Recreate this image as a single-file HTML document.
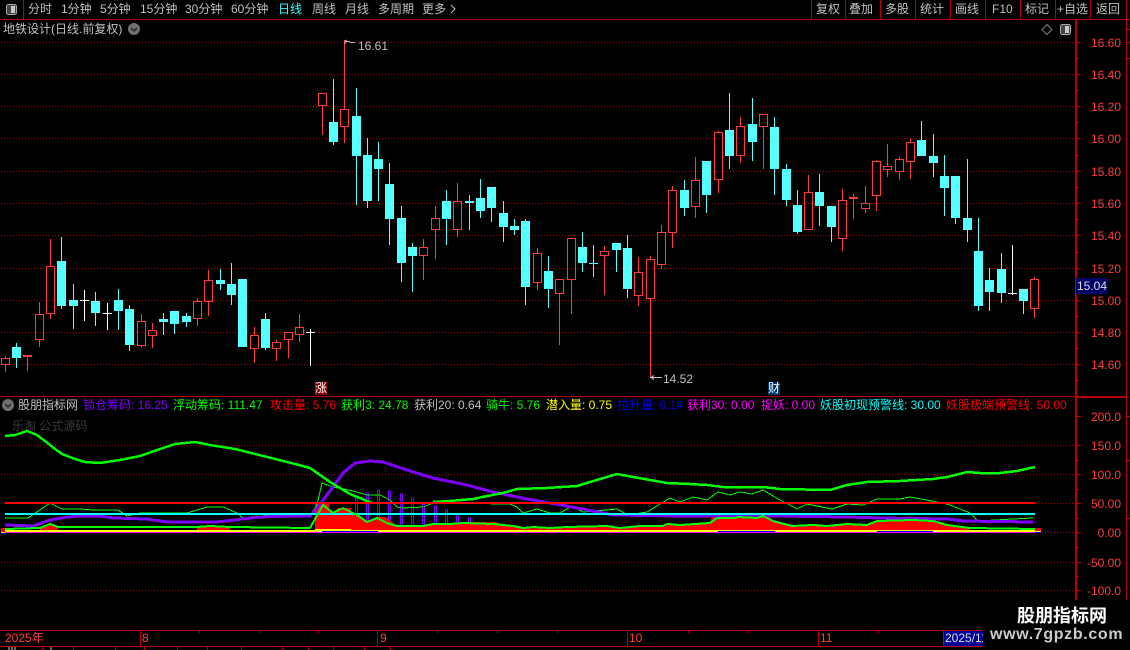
<!DOCTYPE html>
<html><head><meta charset="utf-8"><style>
html,body{margin:0;padding:0;background:#000;width:1130px;height:650px;overflow:hidden}
#w{position:relative;width:1130px;height:650px;background:#000;overflow:hidden;font:12px/14px "Liberation Sans","WenQuanYi Zen Hei","Noto Sans CJK SC",sans-serif;color:#c0c0c0}
.t{position:absolute;white-space:pre}
.r{color:#ff3c3c;right:9px}
.d{color:#ff3c3c}
svg{position:absolute;left:0;top:0}
</style></head><body><div id="w">
<svg width="1130" height="650" shape-rendering="crispEdges">
<g stroke="#b00000" stroke-dasharray="1 2" fill="none">
<path d="M1 42.5H1075M1 74.5H1075M1 106.5H1075M1 138.5H1075M1 171.5H1075M1 203.5H1075M1 235.5H1075M1 268.5H1075M1 300.5H1075M1 332.5H1075M1 364.5H1075"/>
<path d="M1 445.5H1075M1 474.5H1075M1 503.5H1075M1 532.5H1075M1 562.5H1075M1 590.5H1075"/>
</g>
<!-- candles -->
<path fill="none" stroke="#54ffff" d="M16.5 343V368M61.5 237V309M73.5 284V329M95.5 292V326M118.5 289V330M129.5 305V351M163.5 313V335M174.5 311V334M186.5 313V327M220.5 269V290M231.5 263V305M265.5 313V350M333.5 79V145M356.5 88V205M367.5 138V208M378.5 142V201M389.5 163V245M401.5 206V282M412.5 243V292M446.5 190V245M469.5 195V230M480.5 179V218M491.5 187V222M503.5 201V242M514.5 219V235M525.5 219V305M548.5 256V308M582.5 232V272M593.5 245V277M616.5 243V272M627.5 235V298M684.5 180V216M706.5 161V213M729.5 93V169M752.5 98V161M774.5 117V195M786.5 164V206M797.5 190V234M819.5 174V226M831.5 206V242M921.5 121V156M933.5 134V177M944.5 155V216M955.5 176V224M967.5 159V242M978.5 218V311M989.5 268V311M1001.5 253V303M1023.5 289V314"/>
<path fill="#54ffff" d="M12 347h9V358h-9zM57 261h9V306h-9zM69 300h9V306h-9zM91 301h9V313h-9zM114 300h9V311h-9zM125 309h9V345h-9zM159 319h9V322h-9zM170 311h9V324h-9zM182 316h9V322h-9zM216 280h9V284h-9zM227 284h9V295h-9zM238 279h9V347h-9zM261 319h9V348h-9zM329 122h9V142h-9zM352 116h9V156h-9zM363 155h9V201h-9zM374 159h9V169h-9zM385 184h9V219h-9zM397 218h9V263h-9zM408 247h9V256h-9zM442 201h9V219h-9zM465 201h9V203h-9zM476 198h9V211h-9zM487 187h9V208h-9zM499 213h9V227h-9zM510 226h9V230h-9zM521 221h9V287h-9zM544 271h9V289h-9zM578 247h9V263h-9zM589 263h9V264h-9zM612 243h9V250h-9zM623 248h9V289h-9zM680 190h9V208h-9zM702 161h9V195h-9zM725 130h9V156h-9zM748 124h9V142h-9zM770 127h9V169h-9zM782 169h9V200h-9zM793 205h9V232h-9zM815 192h9V206h-9zM827 206h9V227h-9zM917 140h9V156h-9zM929 156h9V163h-9zM940 176h9V188h-9zM951 176h9V218h-9zM963 218h9V230h-9zM974 251h9V306h-9zM985 280h9V292h-9zM997 269h9V293h-9zM1019 289h9V301h-9z"/>
<path fill="none" stroke="#ff3c3c" d="M5.5 356V358M5.5 365V372M1.5 358.5h8V364.5h-8z
M39.5 302V314M39.5 340V347M35.5 314.5h8V339.5h-8z
M50.5 239V266M50.5 314V319M46.5 266.5h8V313.5h-8z
M141.5 314V321M141.5 346V347M137.5 321.5h8V345.5h-8z
M152.5 323V330M152.5 336V348M148.5 330.5h8V335.5h-8z
M197.5 298V301M197.5 319V326M193.5 301.5h8V318.5h-8z
M208.5 270V280M208.5 302V316M204.5 280.5h8V301.5h-8z
M254.5 327V335M254.5 349V363M250.5 335.5h8V348.5h-8z
M276.5 340V342M276.5 349V361M272.5 342.5h8V348.5h-8z
M288.5 340V358M284.5 332.5h8V339.5h-8z
M299.5 314V327M299.5 335V342M295.5 327.5h8V334.5h-8z
M322.5 106V135M318.5 93.5h8V105.5h-8z
M344.5 40V109M344.5 127V143M340.5 109.5h8V126.5h-8z
M423.5 239V247M423.5 256V280M419.5 247.5h8V255.5h-8z
M435.5 206V218M435.5 230V259M431.5 218.5h8V229.5h-8z
M457.5 183V201M457.5 230V237M453.5 201.5h8V229.5h-8z
M537.5 248V253M537.5 283V290M533.5 253.5h8V282.5h-8z
M559.5 294V345M555.5 279.5h8V293.5h-8z
M571.5 280V314M567.5 238.5h8V279.5h-8z
M604.5 246V251M604.5 256V295M600.5 251.5h8V255.5h-8z
M638.5 257V272M638.5 296V306M634.5 272.5h8V295.5h-8z
M650.5 256V259M650.5 299V377M646.5 259.5h8V298.5h-8z
M661.5 225V232M661.5 265V269M657.5 232.5h8V264.5h-8z
M672.5 186V190M672.5 233V248M668.5 190.5h8V232.5h-8z
M695.5 157V180M695.5 207V218M691.5 180.5h8V206.5h-8z
M718.5 131V132M718.5 180V193M714.5 132.5h8V179.5h-8z
M740.5 117V126M740.5 156V163M736.5 126.5h8V155.5h-8z
M763.5 127V169M759.5 114.5h8V126.5h-8z
M808.5 175V192M804.5 192.5h8V229.5h-8z
M842.5 189V200M842.5 239V251M838.5 200.5h8V238.5h-8z
M865.5 186V203M865.5 209V213M861.5 203.5h8V208.5h-8z
M876.5 160V161M876.5 196V211M872.5 161.5h8V195.5h-8z
M887.5 144V166M887.5 170V177M883.5 166.5h8V169.5h-8z
M899.5 157V159M899.5 172V180M895.5 159.5h8V171.5h-8z
M910.5 139V142M910.5 162V179M906.5 142.5h8V161.5h-8z
M1034.5 277V279M1034.5 309V318M1030.5 279.5h8V308.5h-8z
M27.5 357V371M853.5 194V219"/>
<path fill="#ff3c3c" d="M23 355h9v2h-9zM849 197h9v2h-9z"/>
<path fill="none" stroke="#fff" d="M84.5 290V321M80 300.5h9M107.5 303V330M103 313.5h9M310.5 329V366M306 332.5h9M1012.5 245V295M1008 293.5h9"/>
<!-- high/low markers -->
<path fill="none" stroke="#c0c0c0" d="M345 41.5h5M345 41V44M345 41l2-1M350 42.5h5M650 377.5h12M651 377.5l3-2M651 377.5l3 2"/>
<!-- indicator: hollow bars -->
<path fill="none" stroke="#8000ff" d="M355.5 498h2V524h-2zM366.5 493h2V524h-2zM377.5 490h2V524h-2zM388.5 491h2V524h-2zM400.5 494h2V524h-2zM411.5 498h2V524h-2zM422.5 504h2V524h-2zM434.5 506h2V524h-2zM445.5 510h2V524h-2zM456.5 515h2V524h-2zM468.5 518h2V524h-2z"/>
<!-- red area -->
<path fill="#f00" d="M1 528h4v4H1zM40 529L50 524L58 527V530H40zM197 530V527L210 526L230 527V530zM315 530V503H329V511L333 513L338 508H351V512L357 515L367 522L377 517H385L397 526H423L433 524H450L463 522H493L513 526L523 528L533 527L550 528L567 527H607L620 528L640 526H663L667 524H680L710 523L712 517H770L773 521L792 526H813L827 526L847 524H867L877 520H913L933 520L947 525L970 529V530zM1035 528h6v3h-6z"/>
<polyline fill="none" stroke="#00ff00" points="5,518 28,518 37,512 50,503 62,509 80,509 93,510 118,510 127,516 140,513 187,513 207,507 223,507 237,513 243,518 257,516 283,515 310,515 317,505 322,483 333,487 353,491 367,495 380,495 390,500 397,507 403,508 423,507 433,503 510,504 517,507 523,513 537,509 550,513 560,513 572,506 583,512 617,509 628,515 647,512 670,498 680,502 693,497 707,500 718,492 730,495 740,492 752,494 763,490 780,500 790,505 797,509 807,504 832,509 847,504 863,505 877,499 900,499 910,497 937,502 947,504 960,509 970,513 978,521 1013,519 1033,518"/>
<polyline fill="none" stroke="#8000ff" stroke-width="3" points="5,525 33,526 50,520 67,517 80,516 100,516 113,518 147,519 167,522 217,522 233,520 260,517 287,516 310,516 317,508 333,487 343,473 355,463 370,461 383,462 410,471 433,478 467,485 493,492 527,499 550,503 593,511 613,515 680,516 780,516 847,517 880,518 947,519 963,521 1033,522"/>
<polyline fill="none" stroke="#00ff00" stroke-width="2.5" points="5,436 15,435 27,431 37,435 45,441 55,449 62,454 75,459 85,462 100,463 120,460 140,456 160,449 175,444 195,442 210,445 235,449 255,454 275,459 295,464 310,468 330,482 350,494 372,503"/>
<polyline fill="none" stroke="#00ff00" stroke-width="2.5" points="433,502 450,501 473,499 487,496 503,493 517,489 547,488 577,486 590,482 617,474 633,477 667,483 690,484 707,485 723,487 763,487 780,489 830,490 847,485 867,482 900,481 933,479 947,477 967,472 980,473 1000,473 1017,471 1035,467"/>
<rect x="5" y="502" width="1030" height="2" fill="#f00"/>
<rect x="5" y="513" width="1030" height="2" fill="#00ffff"/>
<polyline fill="none" stroke="#00ff00" stroke-width="2" points="5,529 40,528 50,524 58,527 117,527 197,527 210,526 230,527 310,528 323,505 333,513 343,508 357,515 367,522 377,518 387,523 397,526 423,526 433,524 450,524 463,523 493,524 513,526 523,528 533,527 550,528 567,527 607,526 620,528 640,526 663,526 667,524 680,525 710,523 717,518 735,518 738,517 757,518 763,516 773,521 792,526 813,525 827,526 847,524 867,525 877,521 913,520 933,521 947,525 970,528 1035,529"/>
<rect x="5" y="530" width="1030" height="2" fill="#ffff00"/>
<rect x="315" y="529" width="36" height="1" fill="#ffff00"/>
<rect x="322" y="531" width="56" height="1" fill="#0000ff"/>
<rect x="718" y="531" width="57" height="1" fill="#0000ff"/>
<rect x="877" y="531" width="56" height="1" fill="#0000ff"/>
<rect x="5" y="532" width="1030" height="1" fill="#ff00ff"/>
<rect x="1035" y="531" width="6" height="1" fill="#ffff00"/>
<rect x="1035" y="532" width="6" height="1" fill="#0000ff"/>
<rect x="1" y="532" width="4" height="1" fill="#ffff00"/>
<rect x="1" y="533" width="4" height="1" fill="#0000ff"/>
<!-- frame -->
<g fill="#b80000">
<rect x="0" y="19" width="1130" height="1"/>
<rect x="23" y="0" width="1" height="19"/>
<rect x="811" y="0" width="1" height="19"/><rect x="845" y="0" width="1" height="19"/><rect x="880" y="0" width="1" height="19"/><rect x="915" y="0" width="1" height="19"/><rect x="950" y="0" width="1" height="19"/><rect x="985" y="0" width="1" height="19"/><rect x="1020" y="0" width="1" height="19"/><rect x="1055" y="0" width="1" height="19"/><rect x="1090" y="0" width="1" height="19"/><rect x="1126" y="0" width="1" height="19"/>
<rect x="0" y="396" width="1076" height="1"/>
<rect x="1076" y="396" width="50" height="2"/>
<rect x="1075" y="20" width="2" height="580"/>
<rect x="1126" y="20" width="1" height="580"/>
<rect x="1127" y="29" width="3" height="1"/><rect x="1127" y="42" width="3" height="1"/><rect x="1127" y="58" width="3" height="1"/><rect x="1127" y="416" width="3" height="1"/><rect x="1127" y="460" width="3" height="1"/><rect x="1127" y="518" width="3" height="1"/>
<path d="M1077 42h4v1h-4zM1077 58h2v1h-2zM1077 74h4v1h-4zM1077 90h2v1h-2zM1077 106h4v1h-4zM1077 122h2v1h-2zM1077 138h4v1h-4zM1077 155h2v1h-2zM1077 171h4v1h-4zM1077 187h2v1h-2zM1077 203h4v1h-4zM1077 219h2v1h-2zM1077 235h4v1h-4zM1077 252h2v1h-2zM1077 268h4v1h-4zM1077 300h4v1h-4zM1077 316h2v1h-2zM1077 332h4v1h-4zM1077 348h2v1h-2zM1077 364h4v1h-4zM1077 380h2v1h-2z"/>
<path d="M1077 416h4v1h-4zM1077 445h4v1h-4zM1077 460h2v1h-2zM1077 474h4v1h-4zM1077 489h2v1h-2zM1077 503h4v1h-4zM1077 518h2v1h-2zM1077 532h4v1h-4zM1077 547h2v1h-2zM1077 562h4v1h-4zM1077 576h2v1h-2zM1077 590h4v1h-4z"/>
<rect x="0" y="630" width="983" height="1"/>
<rect x="0" y="646" width="983" height="1"/>
<path d="M140 630h1v16h-1zM377 630h1v16h-1zM627 630h1v16h-1zM818 630h1v16h-1zM943 630h1v16h-1zM199 631h1v2h-1zM259 631h1v2h-1zM318 631h1v2h-1zM437 631h1v2h-1zM497 631h1v2h-1zM557 631h1v2h-1zM688 631h1v2h-1zM748 631h1v2h-1zM878 631h1v2h-1z"/>
<path d="M42 647h1v3h-1zM73 647h1v3h-1zM115 647h1v3h-1zM144 647h1v3h-1zM177 647h1v3h-1zM207 647h1v3h-1zM241 647h1v3h-1zM282 647h1v3h-1zM308 647h1v3h-1zM333 647h1v3h-1zM364 647h1v3h-1zM390 647h1v3h-1z"/>
</g>
<rect x="944" y="631" width="39" height="15" fill="#000099"/>
<rect x="1076" y="278" width="32" height="16" fill="#000066"/>
<rect x="315" y="382" width="12" height="13" fill="#8b0000"/>
<rect x="768" y="382" width="12" height="13" fill="#003366"/>
<rect x="983" y="600" width="147" height="50" fill="#000"/>
<!-- icons -->
<g shape-rendering="auto">
<rect x="6.5" y="4.5" width="10" height="10" rx="2" fill="#444" stroke="#aaa"/><rect x="11" y="6" width="4" height="7" fill="#c8c8c8"/>
<rect x="1060.5" y="24.5" width="10" height="10" rx="2" fill="#444" stroke="#aaa"/><rect x="1065" y="26" width="4" height="7" fill="#c8c8c8"/>
<path d="M1047 24.5L1052 29.5L1047 34.5L1042 29.5Z" fill="none" stroke="#808080"/>
<circle cx="134" cy="29" r="6" fill="#707070"/><path d="M131 28l3 3 3-3" fill="none" stroke="#222" stroke-width="1.3"/>
<circle cx="8" cy="405" r="6" fill="#707070"/><path d="M5 404l3 3 3-3" fill="none" stroke="#222" stroke-width="1.3"/>
<path d="M452 8l4 4-4 4" transform="translate(-1,-3)" fill="none" stroke="#c0c0c0"/>
<path d="M9 647v3M12 647v3M15 647v3M51 647v3" stroke="#ccc"/>
</g>
</svg>

<span class="t" style="left:28px;top:2px">分时</span>
<span class="t" style="left:61px;top:2px">1分钟</span>
<span class="t" style="left:100px;top:2px">5分钟</span>
<span class="t" style="left:140px;top:2px">15分钟</span>
<span class="t" style="left:185px;top:2px">30分钟</span>
<span class="t" style="left:231px;top:2px">60分钟</span>
<span class="t" style="left:278px;top:2px;color:#33ffff">日线</span>
<span class="t" style="left:312px;top:2px">周线</span>
<span class="t" style="left:345px;top:2px">月线</span>
<span class="t" style="left:378px;top:2px">多周期</span>
<span class="t" style="left:422px;top:2px">更多</span>

<span class="t" style="left:816px;top:2px">复权</span>
<span class="t" style="left:849px;top:2px">叠加</span>
<span class="t" style="left:885px;top:2px">多股</span>
<span class="t" style="left:920px;top:2px">统计</span>
<span class="t" style="left:955px;top:2px">画线</span>
<span class="t" style="left:992px;top:2px">F10</span>
<span class="t" style="left:1025px;top:2px">标记</span>
<span class="t" style="left:1057px;top:2px">+自选</span>
<span class="t" style="left:1096px;top:2px">返回</span>

<span class="t" style="left:3px;top:22px">地铁设计(日线.前复权)</span>

<span class="t" style="left:358px;top:39px">16.61</span>
<span class="t" style="left:663px;top:372px">14.52</span>
<span class="t" style="left:315px;top:381px;color:#fff">涨</span>
<span class="t" style="left:768px;top:381px;color:#fff">财</span>

<span class="t r" style="top:36px">16.60</span><span class="t r" style="top:68px">16.40</span><span class="t r" style="top:100px">16.20</span><span class="t r" style="top:132px">16.00</span><span class="t r" style="top:165px">15.80</span><span class="t r" style="top:197px">15.60</span><span class="t r" style="top:229px">15.40</span><span class="t r" style="top:262px">15.20</span><span class="t r" style="top:294px">15.00</span><span class="t r" style="top:326px">14.80</span><span class="t r" style="top:358px">14.60</span>
<span class="t" style="left:1077px;top:279px;color:#ddd">15.04</span>

<span class="t r" style="top:410px">200.0</span><span class="t r" style="top:439px">150.0</span><span class="t r" style="top:468px">100.0</span><span class="t r" style="top:497px">50.00</span><span class="t r" style="top:526px">0.00</span><span class="t r" style="top:556px">-50.00</span><span class="t r" style="top:584px">-100.0</span>

<span class="t" style="left:18px;top:398px">股朋指标网</span>
<span class="t" style="left:83px;top:398px;color:#8000ff">锁仓筹码: 16.25</span>
<span class="t" style="left:173px;top:398px;color:#00ff00">浮动筹码: 111.47</span>
<span class="t" style="left:270px;top:398px;color:#ff0000">攻击量: 5.76</span>
<span class="t" style="left:341px;top:398px;color:#00ff00">获利3: 24.78</span>
<span class="t" style="left:414px;top:398px;color:#c0c0c0">获利20: 0.64</span>
<span class="t" style="left:486px;top:398px;color:#00ff00">骑牛: 5.76</span>
<span class="t" style="left:546px;top:398px;color:#ffff00">潜入量: 0.75</span>
<span class="t" style="left:617px;top:398px;color:#0000ff">拉升量: 0.14</span>
<span class="t" style="left:687px;top:398px;color:#ff00ff">获利30: 0.00</span>
<span class="t" style="left:761px;top:398px;color:#ff00ff">捉妖: 0.00</span>
<span class="t" style="left:820px;top:398px;color:#00ffff">妖股初现预警线: 30.00</span>
<span class="t" style="left:946px;top:398px;color:#ff0000">妖股极端预警线: 50.00</span>
<span class="t" style="left:12px;top:419px;color:#3a3a3a">乐淘 公式源码</span>

<span class="t d" style="left:5px;top:631px">2025年</span>
<span class="t d" style="left:142px;top:631px">8</span>
<span class="t d" style="left:380px;top:631px">9</span>
<span class="t d" style="left:629px;top:631px">10</span>
<span class="t d" style="left:820px;top:631px">11</span>
<span class="t" style="left:945px;top:631px;color:#ddd;width:38px;overflow:hidden">2025/11</span>

<span class="t" style="left:1017px;top:604px;font-size:18px;line-height:22px;font-weight:bold;color:#fff;font-family:'Noto Sans CJK SC',sans-serif">股朋指标网</span>
<span class="t" style="left:990px;top:625px;font-size:16px;line-height:20px;font-weight:bold;color:#ccc;letter-spacing:.65px">www.7gpzb.com</span>
</div></body></html>
